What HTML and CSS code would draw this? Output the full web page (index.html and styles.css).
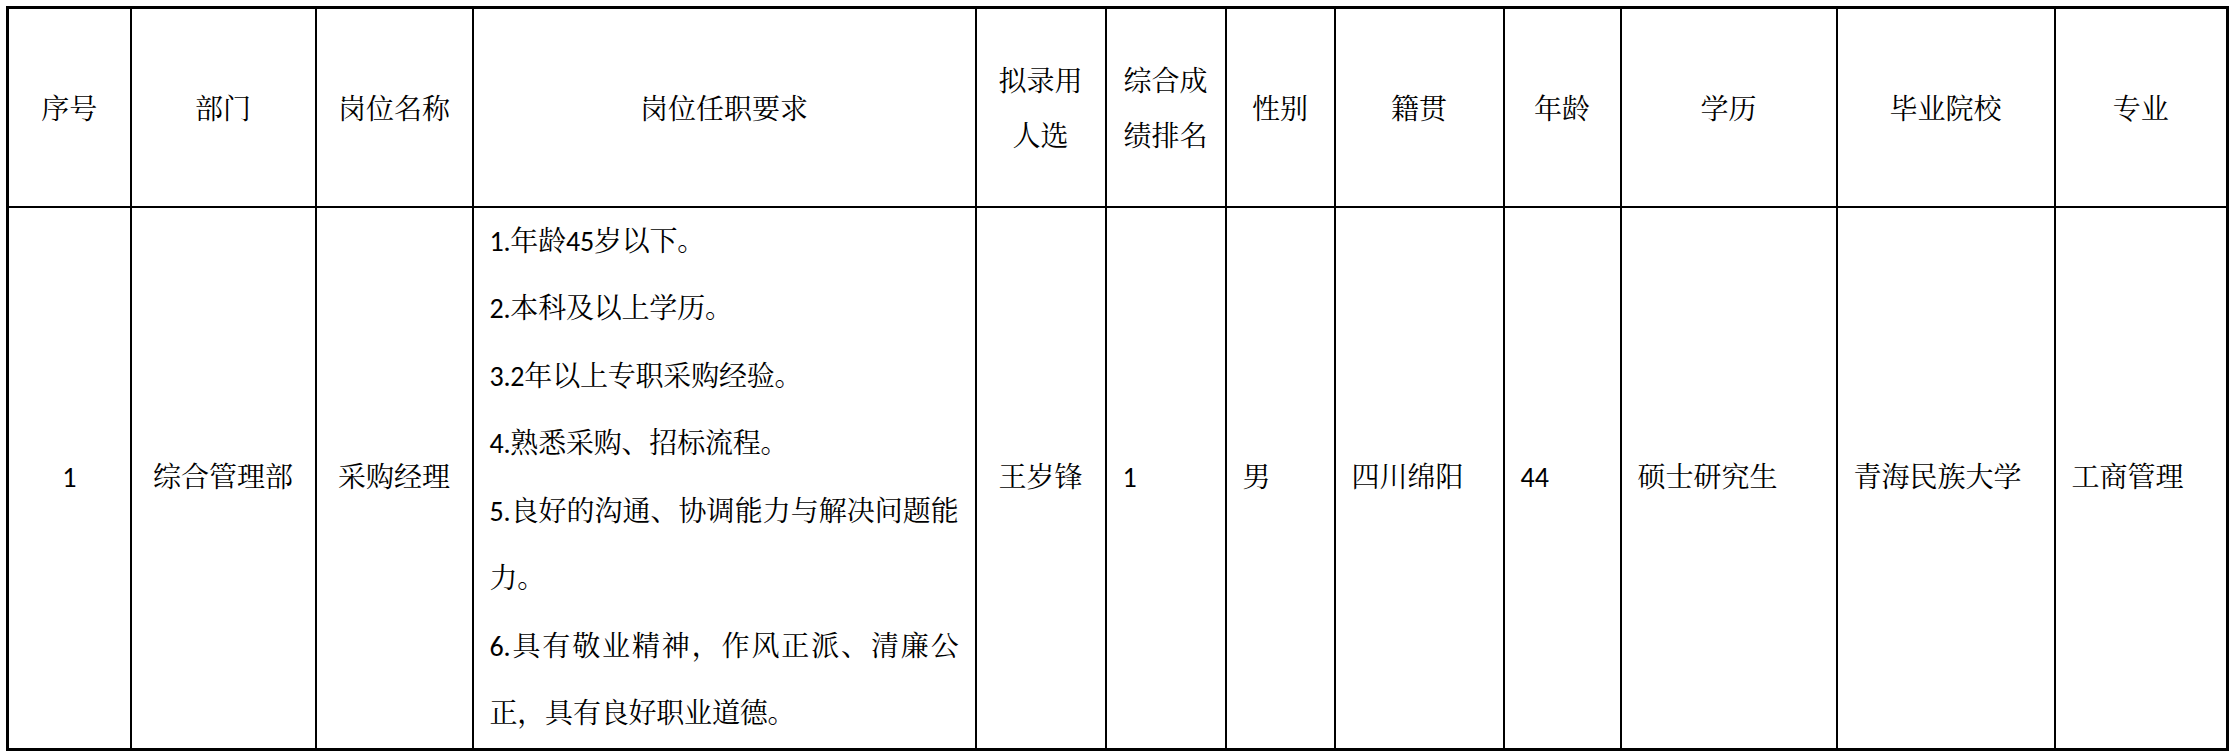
FILE: index.html
```html
<!DOCTYPE html>
<html lang="zh-CN">
<head>
<meta charset="utf-8">
<title>拟录用人选公示</title>
<link rel="stylesheet" href="styles.css">
</head>
<body>
<table class="sheet">
  <colgroup>
    <col class="c-no"><col class="c-dept"><col class="c-post"><col class="c-req">
    <col class="c-name"><col class="c-rank"><col class="c-sex"><col class="c-home">
    <col class="c-age"><col class="c-edu"><col class="c-school"><col class="c-major">
  </colgroup>
  <thead>
    <tr class="head-row">
      <th>序号</th>
      <th>部门</th>
      <th>岗位名称</th>
      <th>岗位任职要求</th>
      <th>拟录用<br>人选</th>
      <th>综合成<br>绩排名</th>
      <th>性别</th>
      <th>籍贯</th>
      <th>年龄</th>
      <th>学历</th>
      <th>毕业院校</th>
      <th>专业</th>
    </tr>
  </thead>
  <tbody>
    <tr class="body-row">
      <td class="center">1</td>
      <td class="center">综合管理部</td>
      <td class="center">采购经理</td>
      <td class="req">
        <p>1.年龄45岁以下。</p>
        <p>2.本科及以上学历。</p>
        <p>3.2年以上专职采购经验。</p>
        <p>4.熟悉采购、招标流程。</p>
        <p>5.良好的沟通、协调能力与解决问题能力。</p>
        <p>6.具有敬业精神，作风正派、清廉公正，具有良好职业道德。</p>
      </td>
      <td class="center">王岁锋</td>
      <td class="left">1</td>
      <td class="left">男</td>
      <td class="left">四川绵阳</td>
      <td class="left">44</td>
      <td class="left">硕士研究生</td>
      <td class="left">青海民族大学</td>
      <td class="left">工商管理</td>
    </tr>
  </tbody>
</table>
</body>
</html>
```

FILE: styles.css
```css
html, body {
  margin: 0;
  padding: 0;
  background: #ffffff;
}

body {
  padding: 6px 0 0 6px;
  color: #000000;
  font-family: Carlito, Lato, "Noto Serif CJK SC", "Noto Sans CJK SC", sans-serif;
  font-size: 28px;
}

.sheet {
  border-collapse: collapse;
  table-layout: fixed;
  width: 2222px;
  border: 3px solid #000;
}

.c-no { width: 123px; }
.c-dept { width: 185px; }
.c-post { width: 157px; }
.c-req { width: 503px; }
.c-name { width: 130px; }
.c-rank { width: 120px; }
.c-sex { width: 109px; }
.c-home { width: 169px; }
.c-age { width: 117px; }
.c-edu { width: 216px; }
.c-school { width: 218px; }
.c-major { width: 173px; }

.sheet th,
.sheet td {
  border: 2px solid #000;
  vertical-align: middle;
  padding: 0 16px;
}

.sheet th {
  font-family: "Noto Serif CJK SC", "Noto Sans CJK SC", serif;
  font-weight: normal;
  text-align: center;
  line-height: 55px;
}

.head-row {
  height: 199px;
}

.body-row {
  height: 540px;
}

.sheet td {
  line-height: 67.5px;
}

.center {
  text-align: center;
}

.left {
  text-align: left;
}

.req {
  text-align: justify;
  padding: 0 0 0 16px;
}

.req p {
  margin: 0;
  line-height: 67.5px;
  text-align: justify;
  letter-spacing: -0.2px;
}
```
